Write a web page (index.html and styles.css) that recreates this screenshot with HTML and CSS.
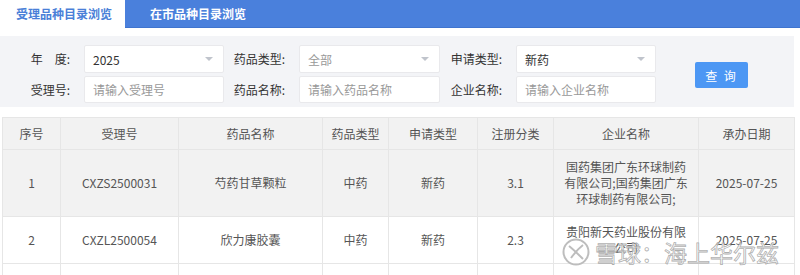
FILE: index.html
```html
<!DOCTYPE html>
<html lang="zh-CN">
<head>
<meta charset="utf-8">
<title>受理品种目录浏览</title>
<link rel="stylesheet" href="styles.css">
</head>
<body>
<div class="page">
  <div class="tabs">
    <div class="tab active">受理品种目录浏览</div>
    <div class="tab">在市品种目录浏览</div>
  </div>

  <div class="filters">
    <div class="grid">
      <label class="lbl">年　度:</label>
      <div class="field select"><span class="val">2025</span><i class="arrow"></i></div>
      <label class="lbl">药品类型:</label>
      <div class="field select"><span class="ph">全部</span><i class="arrow"></i></div>
      <label class="lbl">申请类型:</label>
      <div class="field select"><span class="val">新药</span><i class="arrow"></i></div>

      <label class="lbl">受理号:</label>
      <div class="field"><span class="ph">请输入受理号</span></div>
      <label class="lbl">药品名称:</label>
      <div class="field"><span class="ph">请输入药品名称</span></div>
      <label class="lbl">企业名称:</label>
      <div class="field"><span class="ph">请输入企业名称</span></div>
    </div>
    <button class="btn">查 询</button>
  </div>

  <div class="table-wrap">
    <table class="grid-table">
      <colgroup>
        <col class="c1"><col class="c2"><col class="c3"><col class="c4">
        <col class="c5"><col class="c6"><col class="c7"><col class="c8">
      </colgroup>
      <thead>
        <tr><th>序号</th><th>受理号</th><th>药品名称</th><th>药品类型</th><th>申请类型</th><th>注册分类</th><th>企业名称</th><th>承办日期</th></tr>
      </thead>
      <tbody>
        <tr class="row hover r1">
          <td>1</td><td>CXZS2500031</td><td>芍药甘草颗粒</td><td>中药</td><td>新药</td><td>3.1</td>
          <td>国药集团广东环球制药有限公司;国药集团广东环球制药有限公司;</td><td>2025-07-25</td>
        </tr>
        <tr class="row r2">
          <td>2</td><td>CXZL2500054</td><td>欣力康胶囊</td><td>中药</td><td>新药</td><td>2.3</td>
          <td>贵阳新天药业股份有限公司</td><td>2025-07-25</td>
        </tr>
        <tr class="row r3">
          <td></td><td></td><td></td><td></td><td></td><td></td><td></td><td></td>
        </tr>
      </tbody>
    </table>
    <div class="watermark">
      <svg class="wm-logo" viewBox="0 0 30 28" width="30" height="28">
        <circle cx="14" cy="14" r="12.5" fill="rgba(255,255,255,0.5)" stroke="#bdbdbd" stroke-width="2"/>
        <path d="M7 8 C12 12, 16 16, 21 21" fill="none" stroke="#bdbdbd" stroke-width="2"/>
        <path d="M21 7 C17 10, 14 13, 9 20" fill="none" stroke="#bdbdbd" stroke-width="2"/>
      </svg>
      <span class="wm-text">雪球：海上华尔兹</span>
    </div>
  </div>
</div>
</body>
</html>
```

FILE: styles.css
```css
* { box-sizing: border-box; }
html, body { margin: 0; padding: 0; background: #fff; }
body {
  font-family: "Noto Sans CJK SC", "Noto Sans", sans-serif;
  font-size: 12px;
  color: #333;
  width: 800px;
  height: 275px;
  overflow: hidden;
}
.page { width: 800px; }

.tabs {
  display: flex;
  height: 28px;
  background: #4a80dc;
  border-bottom: 1px solid #3f74cf;
}
.tab {
  height: 28px;
  line-height: 27px;
  font-size: 12px;
  font-weight: bold;
  color: #fff;
  padding: 0 0 0 25px;
}
.tab.active {
  width: 125px;
  padding-left: 16px;
  background: #fff;
  color: #4a7fd8;
}

.filters {
  margin-top: 8px;
  width: 794px;
  height: 71px;
  background: #f3f4f7;
  display: flex;
  align-items: flex-start;
  padding: 9px 0 0 9px;
}
.grid {
  display: grid;
  grid-template-columns: 75px 140px 75px 141px 76px 140px;
  grid-template-rows: 28px 27px;
  row-gap: 3px;
}
.lbl {
  text-align: right;
  line-height: 28px;
  padding-right: 14px;
  color: #333;
  white-space: nowrap;
}
.field {
  background: #fff;
  border: 1px solid #e9e9ec;
  border-radius: 2px;
  display: flex;
  align-items: center;
  justify-content: space-between;
  padding: 0 10px 0 8px;
}
.val { color: #333; }
.ph { color: #999; }
.arrow {
  width: 0; height: 0;
  border-left: 4px solid transparent;
  border-right: 4px solid transparent;
  border-top: 4px solid #c0c4cc;
}
.btn {
  margin: 17px 0 0 39px;
  width: 53px;
  height: 26px;
  border: 0;
  border-radius: 2px;
  background: #4c97f4;
  color: #fff;
  font-family: inherit;
  font-size: 12px;
  padding: 0;
  letter-spacing: 2px;
}

.table-wrap {
  position: relative;
  margin: 10px 0 0 2px;
  width: 792px;
}
.grid-table {
  width: 792px;
  border-collapse: collapse;
  table-layout: fixed;
}
.c1 { width: 58px; } .c2 { width: 118px; } .c3 { width: 144px; } .c4 { width: 66px; }
.c5 { width: 89px; } .c6 { width: 76px; } .c7 { width: 145px; } .c8 { width: 96px; }
.grid-table th, .grid-table td {
  border: 1px solid #e6e6e6;
  text-align: center;
  vertical-align: middle;
  color: #555;
  font-size: 12px;
  line-height: 16px;
  padding: 0 4px;
}
.grid-table td:nth-child(7) { padding: 0 10px; }
.grid-table th {
  height: 32px;
  font-weight: normal;
  background: #f2f2f2;
  white-space: nowrap;
}
.row.hover td { background: #f2f2f2; }
.r1 td { height: 67px; }
.r2 td { height: 47px; }
.r3 td { height: 12px; }

.watermark {
  position: absolute;
  left: 560px;
  top: 121px;
  display: flex;
  align-items: center;
  gap: 3px;
  pointer-events: none;
}
.wm-text {
  font-size: 23px;
  line-height: 26px;
  color: rgba(255,255,255,0.6);
  -webkit-text-stroke: 0.8px rgba(160,160,160,0.85);
}
```
